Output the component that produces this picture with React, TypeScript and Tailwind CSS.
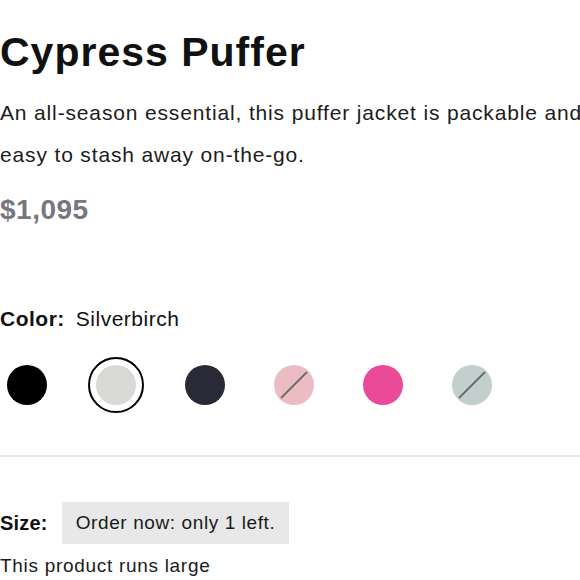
import React from "react";

type Swatch = { name: string; color: string; slashed?: boolean };

const SWATCHES: Swatch[] = [
  { name: "Black", color: "bg-[#000000]" },
  { name: "Silverbirch", color: "bg-[#d9d9d6]" },
  { name: "Navy", color: "bg-[#2a2937]" },
  { name: "Blush", color: "bg-[#ecbcc3]", slashed: true },
  { name: "Fuchsia", color: "bg-[#ea4b98]" },
  { name: "Sage", color: "bg-[#c3cfcd]", slashed: true },
];

function SwatchDot({ swatch, selected }: { swatch: Swatch; selected: boolean }) {
  const dot = (
    <div className={`relative h-10 w-10 rounded-full ${swatch.color}`}>
      {swatch.slashed && (
        <svg viewBox="0 0 40 40" className="absolute inset-0 h-10 w-10">
          <line x1="7" y1="33" x2="33" y2="7" stroke="#6b6b70" strokeWidth="2" />
        </svg>
      )}
    </div>
  );

  return (
    <div className="flex h-14 w-14 items-center justify-center">
      {selected ? (
        <div className="flex h-14 w-14 items-center justify-center rounded-full border-2 border-black">
          {dot}
        </div>
      ) : (
        dot
      )}
    </div>
  );
}

export default function App() {
  return (
    <div className="h-[580px] w-[580px] overflow-hidden bg-white pt-[28px] font-['Liberation_Sans',Arial,sans-serif] text-[#111]">
      {/* Title + description */}
      <h1 className="text-[41px] font-bold leading-[48px] tracking-[1px]">Cypress Puffer</h1>
      <div className="mt-4 text-[21px] leading-[42px] tracking-[0.85px] text-[#1c1c1c] whitespace-nowrap">
        <p>An all-season essential, this puffer jacket is packable and</p>
        <p>easy to stash away on-the-go.</p>
      </div>
      <p className="mt-[17px] text-[28px] font-bold leading-[34px] tracking-[0.5px] text-[#777780]">$1,095</p>

      {/* Color */}
      <div className="mt-[78px] flex items-center text-[21px] leading-[28px] tracking-[0.5px]">
        <span className="font-bold">Color:</span>
        <span className="ml-[11px]">Silverbirch</span>
      </div>
      <div className="-ml-px mt-6 flex items-center gap-[33px]">
        {SWATCHES.map((s) => (
          <SwatchDot key={s.name} swatch={s} selected={s.name === "Silverbirch"} />
        ))}
      </div>

      <div className="mt-[42px] h-[2px] w-full bg-[#e6e6e6]" />

      {/* Size */}
      <div className="mt-[45px] flex items-center">
        <span className="text-[20px] font-bold tracking-[0.2px]">Size:</span>
        <div className="ml-[14px] flex h-[42px] items-center bg-[#e8e8e8] px-[14px] text-[19px] tracking-[0.6px] text-[#1a1a1a]">
          Order now: only 1 left.
        </div>
      </div>
      <p className="mt-[9px] text-[19px] leading-[26px] tracking-[0.7px] text-[#1a1a1a]">This product runs large</p>
    </div>
  );
}
